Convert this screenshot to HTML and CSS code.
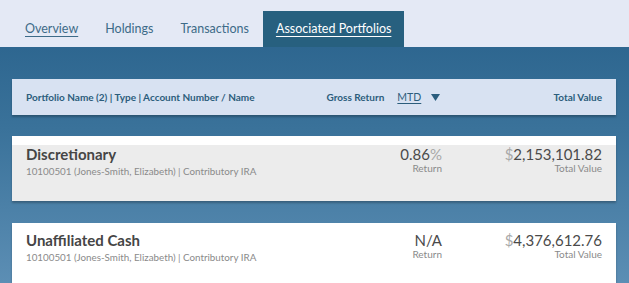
FILE: index.html
```html
<!DOCTYPE html>
<html>

<head>
    <link rel="stylesheet" href="styles.css">
</head>

<body>
    <div class="tabs">
        <a href="./" class="tab tab_link">Overview</a>
        <a href="./" class="tab">Holdings</a>
        <a href="./" class="tab">Transactions</a>
        <a href="./" class="tab tab_active">Associated Portfolios</a>
    </div>
    <div class="content">
        <div class="head">
            <p class="head_name">Portfolio Name (2) | Type | Account Number / Name</p>
            <div class="head_return">
                <span>Gross Return</span>
                <a href="./" class="mtd">MTD</a>
                <svg class="caret" width="9" height="7" viewBox="0 0 9 7">
                    <path d="M0 0 L9 0 L4.5 7 Z" fill="#2a5d7e" />
                </svg>
            </div>
            <p class="head_value">Total Value</p>
        </div>
        <div class="card card_selected">
            <div class="card_name">
                <p class="name">Discretionary</p>
                <p class="sub">10100501 (Jones-Smith, Elizabeth) | Contributory IRA</p>
            </div>
            <div class="card_return">
                <p class="num">0.86<span class="faint">%</span></p>
                <p class="label">Return</p>
            </div>
            <div class="card_value">
                <p class="num"><span class="faint">$</span>2,153,101.82</p>
                <p class="label">Total Value</p>
            </div>
        </div>
        <div class="card">
            <div class="card_name">
                <p class="name">Unaffiliated Cash</p>
                <p class="sub">10100501 (Jones-Smith, Elizabeth) | Contributory IRA</p>
            </div>
            <div class="card_return">
                <p class="num">N/A</p>
                <p class="label">Return</p>
            </div>
            <div class="card_value">
                <p class="num"><span class="faint">$</span>4,376,612.76</p>
                <p class="label">Total Value</p>
            </div>
        </div>
    </div>
</body>

</html>
```

FILE: styles.css
```css
body {
    margin: 0;
    font-family: "Lato", "Liberation Sans", sans-serif;
    background: linear-gradient(#27608a 0%, #3a729a 45%, #5d8fb5 100%);
    min-height: 283px;
    overflow: hidden;
}

p {
    margin: 0;
}

a {
    text-decoration: none;
}

.tabs {
    background-color: #e4e9f5;
    height: 47px;
    display: flex;
    align-items: flex-end;
    padding-left: 12px;
}

.tab {
    height: 36px;
    line-height: 36px;
    padding: 0 13px;
    margin-right: 1px;
    font-size: 12.5px;
    color: #3d6b88;
}

.tab_link {
    text-decoration: underline;
    text-underline-offset: 3px;
}

.tab_active {
    background-color: #27607f;
    color: white;
    text-decoration: underline;
    text-underline-offset: 3px;
}

.content {
    padding: 32px 13px 0 12px;
}

.head {
    background-color: #d8e2f2;
    height: 36px;
    display: flex;
    align-items: center;
    padding: 0 14px 0 14px;
    font-size: 10px;
    font-weight: bold;
    color: #2c5d7c;
    box-shadow: 0 2px 2px rgba(0, 0, 0, 0.25);
}

.head_name {
    flex: 1;
}

.head_return {
    display: flex;
    align-items: center;
    width: 227px;
}

.head_return span {
    margin-right: 13px;
}

.mtd {
    color: #2c5d7c;
    font-weight: normal;
    font-size: 10.5px;
    text-decoration: underline;
    text-underline-offset: 2px;
    margin-right: 10px;
}

.head_value {
    text-align: right;
}

.card {
    margin-top: 21px;
    background-color: white;
    display: flex;
    padding: 10px 14px 0 14px;
    height: 56px;
    box-shadow: 0 2px 2px rgba(0, 0, 0, 0.25);
}

.card + .card {
    margin-top: 22px;
    padding-top: 8px;
}

.card_selected {
    background-color: #ececec;
    border-top: 9px solid white;
    padding-top: 0;
}

.card_name {
    flex: 1;
}

.name {
    font-size: 15px;
    font-weight: bold;
    color: #454545;
    line-height: 18px;
}

.sub {
    font-size: 9.8px;
    color: #8a8a8a;
    line-height: 13px;
    margin-top: 2px;
}

.card_return,
.card_value {
    text-align: right;
}

.card_value {
    width: 160px;
}

.num {
    font-size: 15px;
    color: #4a4a4a;
    line-height: 18px;
}

.faint {
    color: #a8a8a8;
}

.label {
    font-size: 10px;
    color: #8a8a8a;
    line-height: 11px;
}
```
